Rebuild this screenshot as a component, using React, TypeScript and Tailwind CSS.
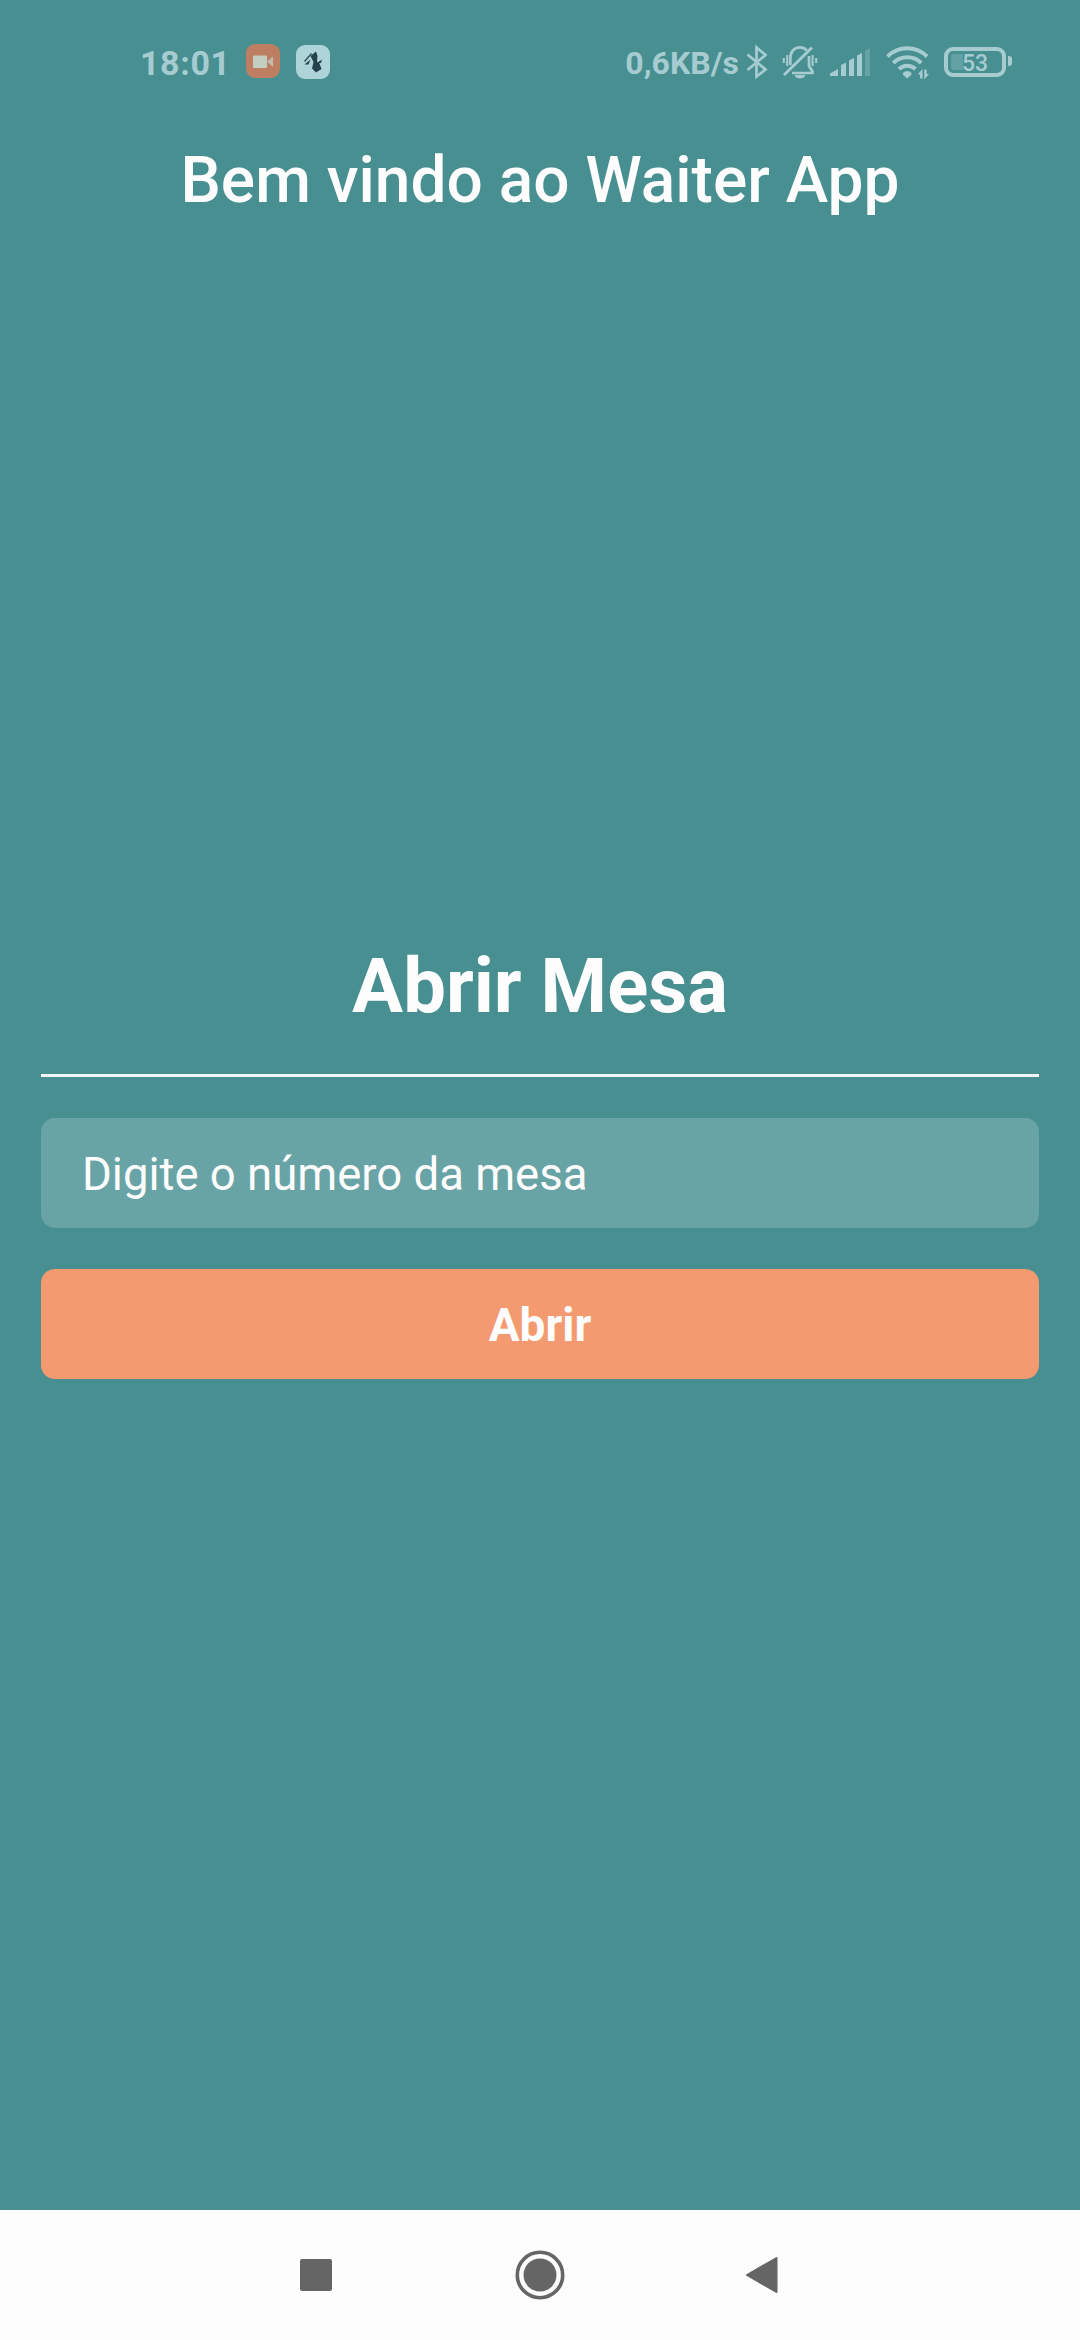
import React from "react";

const ink = "#a6ccd1";

function CameraBadge() {
  return (
    <svg className="ml-[20px] h-[36px] w-[34px]" viewBox="0 0 34 36">
      <rect x="0" y="0" width="34" height="34" rx="9" fill="#bd7e61" />
      <rect x="7" y="11.500" width="14" height="12.500" rx="1" fill="#c4cdc1" />
      <path d="M21 17.500 27 12.500v10.500z" fill="#c4bcae" />
    </svg>
  );
}

function AppBadge() {
  return (
    <svg className="ml-[16px] h-[36px] w-[34px]" viewBox="0 0 34 36">
      <rect x="0" y="1" width="34" height="34" rx="9" fill="#aed3d8" />
      <path d="M14.500 12 20 7.500 21.500 12 21 17.500 23.500 19.500 25.500 25 20 28.500 16 24.500 17.500 18z" fill="#24434d" />
      <path d="M8.500 20.500 14.500 15.500 12.500 20.500zM20 19.500 26 15.500 25 19z" fill="#24434d" />
      <path d="M8.500 17.500 15.500 9.500" stroke="#24434d" strokeWidth="1.200" fill="none" />
    </svg>
  );
}

function Bluetooth() {
  return (
    <svg className="ml-[7px] h-[36px] w-[22px]" viewBox="0 0 22 36" fill="none" stroke={ink} strokeWidth="2.700">
      <path d="M1.500 10.500 19.500 25.500 10.500 32.500V3.500L19.500 11 1.500 26" />
    </svg>
  );
}

function BellOff() {
  return (
    <svg className="ml-[14px] h-[36px] w-[36px]" viewBox="0 0 36 36" fill="none" stroke={ink} strokeWidth="2.700">
      <path d="M8.300 21V14C8.300 7.500 12.500 3.300 18 3.300c2.800 0 5 1 6.700 3M27 12v10l3.500 5.500v1.500H10" />
      <path d="M2 31 30 3.500" strokeWidth="2.900" />
      <path d="M1.800 14v5M5.200 11v11M30.600 11v11M34.200 14v5" strokeWidth="2.100" />
      <path d="M12.800 31h10.400a5.200 3.600 0 0 1-10.400 0z" fill={ink} stroke="none" />
    </svg>
  );
}

function Signal() {
  return (
    <svg className="ml-[12px] h-[36px] w-[41px]" viewBox="0 0 41 36" fill={ink}>
      <path d="M0 32v-2.500L8 25v7zM11 32V21l5-2.500V32zM19 32V16.500l5-2.500v18zM27 32V11.500L32 9v23z" />
      <path d="M35 32V7l5-3v28z" opacity=".32" />
    </svg>
  );
}

function Wifi() {
  return (
    <svg className="ml-[15px] h-[36px] w-[43px]" viewBox="0 0 43 36" fill="none" stroke={ink} strokeWidth="4">
      <path d="M1.500 12.500a28 28 0 0 1 39.500 0M7.300 19a20 20 0 0 1 27.900 0M13 25a12 12 0 0 1 16.500 0" />
      <path d="M17 28.700q4.200-3.600 8.400 0v2l-4.200 3.800-4.200-3.800z" fill={ink} stroke="none" />
      <path d="M31.500 30.500 36.500 25v9.500h-2.500v-4zM43 30 38.300 35.500V25.500h2.400v4.500z" fill={ink} stroke="none" />
    </svg>
  );
}

function Battery() {
  return (
    <div className="ml-[15px] flex items-center gap-[2px]">
      <div className="flex h-[30px] w-[62px] rounded-[9px] border-4 border-[#a6ccd1] p-[3px]">
        <div className="flex h-4 w-full items-center justify-center rounded-[3px] bg-linear-to-r from-[#64a1a5] from-25% to-transparent to-25% pt-[2px] text-[23px] font-medium text-[#a6ccd1]">
          53
        </div>
      </div>
      <div className="mb-[2px] h-[10px] w-[4px] rounded-r-[3px] bg-[#a6ccd1]" />
    </div>
  );
}

function StatusBar() {
  return (
    <div className="mt-[43px] flex h-[38px] items-center pr-[68px] pl-[140px] leading-none font-bold text-[#a6ccd1]">
      <span className="w-[86px] pt-[2px] text-[34px] tracking-[0.6px] whitespace-nowrap">18:01</span>
      <CameraBadge />
      <AppBadge />
      <span className="ml-auto pt-[2px] text-[32px] whitespace-nowrap">0,6KB/s</span>
      <Bluetooth />
      <BellOff />
      <Signal />
      <Wifi />
      <Battery />
    </div>
  );
}

function NavBar() {
  return (
    <nav className="flex h-[130px] items-center bg-[#fdfdfd] pl-[300px]">
      <div className="h-[32px] w-[32px] rounded-[2px] bg-[#656565]" />
      <svg className="ml-[183px] h-[50px] w-[50px]" viewBox="0 0 50 50">
        <circle cx="25" cy="25" r="22.700" fill="none" stroke="#656565" strokeWidth="3.600" />
        <circle cx="25" cy="25" r="16.500" fill="#656565" />
      </svg>
      <svg className="ml-[179px] h-[38px] w-[34px]" viewBox="0 0 34 38">
        <path d="M3 19 32.500 2v34z" fill="#656565" stroke="#656565" strokeWidth="2" strokeLinejoin="round" />
      </svg>
    </nav>
  );
}

export default function App() {
  return (
    <div className="flex h-[2340px] w-[1080px] flex-col overflow-hidden bg-[#488f91] font-[Roboto,sans-serif] text-[#fdfdfd]">
      <StatusBar />
      <h1 className="mt-[62px] text-center text-[64px] leading-[76px] font-medium">Bem vindo ao Waiter App</h1>
      <main className="mt-[721px] flex flex-1 flex-col px-[41px]">
        <h2 className="text-center text-[76px] leading-[92px] font-bold">Abrir Mesa</h2>
        <div className="mt-[42px] h-[3px] shrink-0 bg-[#f4f4fb]" />
        <input
          className="mt-[41px] h-[110px] shrink-0 rounded-[14px] bg-[#68a3a6] px-[41px] pt-[3px] text-[45.5px] outline-none placeholder:text-[#fdfdfd] placeholder:opacity-100"
          placeholder="Digite o número da mesa"
        />
        <button className="mt-[41px] h-[110px] shrink-0 rounded-[14px] bg-[#f49a70] pt-[3px] text-[46px] font-bold">Abrir</button>
      </main>
      <NavBar />
    </div>
  );
}
